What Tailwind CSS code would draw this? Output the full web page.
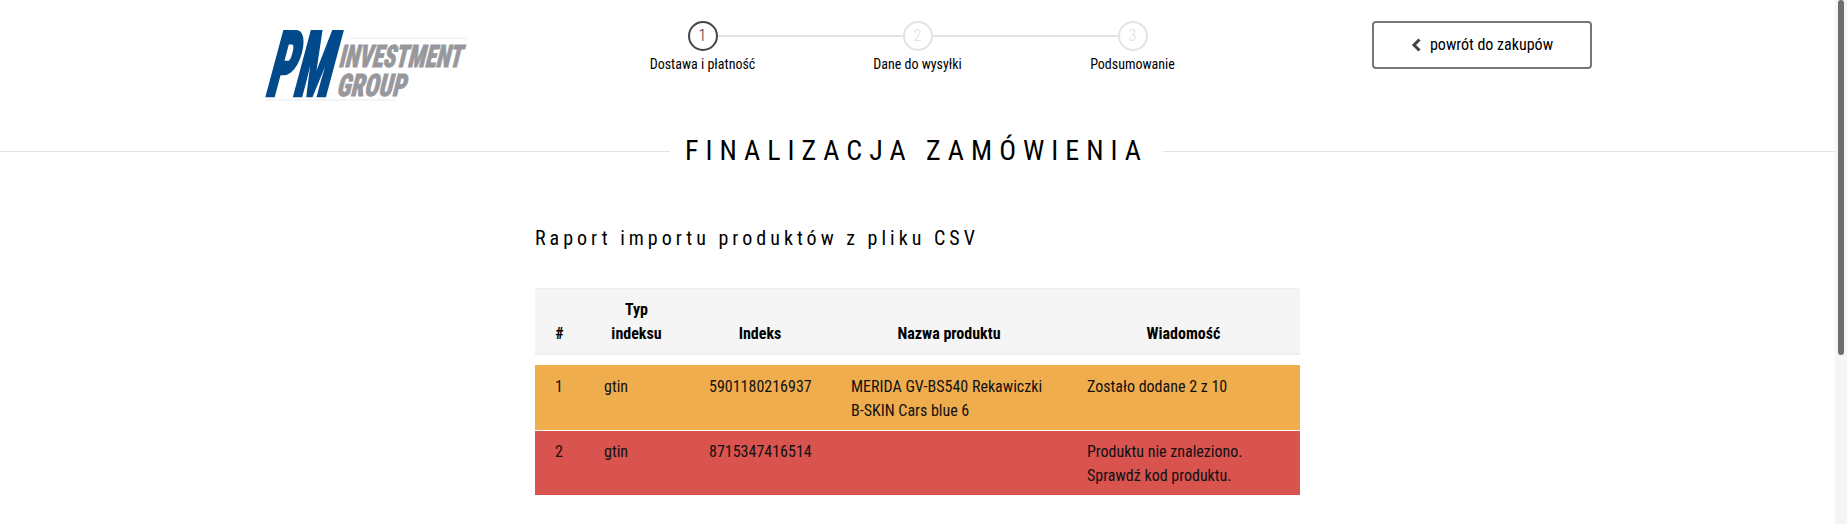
<!DOCTYPE html>
<html lang="pl">
<head>
<meta charset="utf-8">
<script src="https://cdn.jsdelivr.net/npm/@tailwindcss/browser@4"></script>
<title>Finalizacja zamówienia</title>
</head>
<body class="bg-white text-black font-['Roboto_Condensed','Roboto',sans-serif] [font-stretch:75%] h-[524px] overflow-hidden flex">
<main class="w-[1835px] shrink-0">
  <header class="h-[151px] relative">
    <div class="flex pt-[21px] pl-[264px]">
      <svg class="w-[204px] h-[80px] mt-[9px] shrink-0 overflow-visible" viewBox="0 0 204 80">
        <line x1="86" y1="8" x2="203" y2="8" stroke="#e4ebf2" stroke-width="1"/>
        <line x1="1" y1="70" x2="131" y2="70" stroke="#e4ebf2" stroke-width="1"/>
        <text transform="translate(0 66) skewX(-15)" font-family="Roboto" font-weight="900" font-size="91" fill="#004a8c" stroke="#004a8c" stroke-width="2.500" textLength="64" lengthAdjust="spacingAndGlyphs">PM</text>
        <text transform="translate(74 37) skewX(-14)" font-family="Roboto" font-weight="900" font-size="31" fill="#98989c" stroke="#98989c" stroke-width="0.800" textLength="123" lengthAdjust="spacingAndGlyphs">INVESTMENT</text>
        <text transform="translate(72 66) skewX(-14)" font-family="Roboto" font-weight="900" font-size="31" fill="#98989c" stroke="#98989c" stroke-width="0.800" textLength="69" lengthAdjust="spacingAndGlyphs">GROUP</text>
      </svg>
      <ol class="ml-[127px] w-[645px] h-[60px] flex shrink-0 relative text-sm">
        <li class="w-[215px] flex flex-col items-center relative">
          <span class="absolute left-1/2 right-[-107px] top-[14px] h-[2px] bg-[#e3e3e3]"></span>
          <span class="relative w-[30px] h-[30px] rounded-full border-2 border-[#444] bg-white flex items-center justify-center text-base font-light text-[#333]">1</span>
          <span class="mt-[3px]">Dostawa i płatność</span>
        </li>
        <li class="w-[215px] flex flex-col items-center relative">
          <span class="absolute left-1/2 right-[-107px] top-[14px] h-[2px] bg-[#e3e3e3]"></span>
          <span class="relative w-[30px] h-[30px] rounded-full border-2 border-[#e3e3e3] bg-white flex items-center justify-center text-base font-light text-[#ddd]">2</span>
          <span class="mt-[3px]">Dane do wysyłki</span>
        </li>
        <li class="w-[215px] flex flex-col items-center relative">
          <span class="relative w-[30px] h-[30px] rounded-full border-2 border-[#e3e3e3] bg-white flex items-center justify-center text-base font-light text-[#ddd]">3</span>
          <span class="mt-[3px]">Podsumowanie</span>
        </li>
      </ol>
      <a class="ml-[132px] w-[220px] h-[48px] border-2 border-[#777] rounded-[4px] flex items-center justify-center gap-[8px] text-base shrink-0">
        <svg class="w-[11px] h-[14px]" viewBox="0 0 11 14"><path d="M8.500 1.500 3 7l5.500 5.500" fill="none" stroke="#444" stroke-width="3"/></svg>
        powrót do zakupów
      </a>
    </div>
    <div class="absolute left-0 right-0 top-[151px] h-px bg-[#e3e3e3]"></div>
    <h1 class="absolute left-[670px] top-[131px] w-[493px] bg-white text-center text-[28px] leading-[40px] tracking-[0.25em] text-black">FINALIZACJA ZAMÓWIENIA</h1>
  </header>
  <section class="mt-[73px] ml-[535px] w-[765px]">
    <h2 class="text-xl leading-[28px] tracking-[0.2em]">Raport importu produktów z pliku CSV</h2>
    <table class="mt-[36px] w-[765px] table-fixed border-collapse text-base leading-[24px]">
      <colgroup><col class="w-[49px]"><col class="w-[105px]"><col class="w-[142px]"><col class="w-[236px]"><col class="w-[233px]"></colgroup>
      <thead class="bg-[#f5f5f5]">
        <tr class="h-[65px] border-t border-b-2 border-[#eeeeee] align-bottom">
          <th class="px-[20px] pb-[7px] font-bold">#</th>
          <th class="px-[20px] pb-[7px] font-bold">Typ indeksu</th>
          <th class="px-[20px] pb-[7px] font-bold">Indeks</th>
          <th class="px-[20px] pb-[7px] font-bold">Nazwa produktu</th>
          <th class="px-[20px] pb-[7px] font-bold">Wiadomość</th>
        </tr>
      </thead>
      <tbody class="text-[#111]">
        <tr class="h-[11px]"><td colspan="5"></td></tr>
        <tr class="bg-[#f0ad4e] align-top border-b border-white">
          <td class="pl-[20px] pt-[10px] pb-[7px]">1</td>
          <td class="pl-[20px] pt-[10px] pb-[7px]">gtin</td>
          <td class="pl-[20px] pt-[10px] pb-[7px]">5901180216937</td>
          <td class="px-[20px] pt-[10px] pb-[7px]">MERIDA GV-BS540 Rekawiczki B-SKIN Cars blue 6</td>
          <td class="pl-[20px] pt-[10px] pb-[7px]">Zostało dodane 2 z 10</td>
        </tr>
        <tr class="bg-[#d9534f] align-top">
          <td class="pl-[20px] pt-[9px] pb-[7px]">2</td>
          <td class="pl-[20px] pt-[9px] pb-[7px]">gtin</td>
          <td class="pl-[20px] pt-[9px] pb-[7px]">8715347416514</td>
          <td class="px-[20px] pt-[9px] pb-[7px]"></td>
          <td class="pl-[20px] pr-[40px] pt-[9px] pb-[7px]">Produktu nie znaleziono. Sprawdź kod produktu.</td>
        </tr>
      </tbody>
    </table>
  </section>
</main>
<aside class="w-[12px] h-[524px] bg-[#f5f5f5] pl-[3px] pr-[3px]">
  <div class="h-[355px] bg-[#6e6e6e] rounded-[3px]"></div>
</aside>
</body>
</html>
